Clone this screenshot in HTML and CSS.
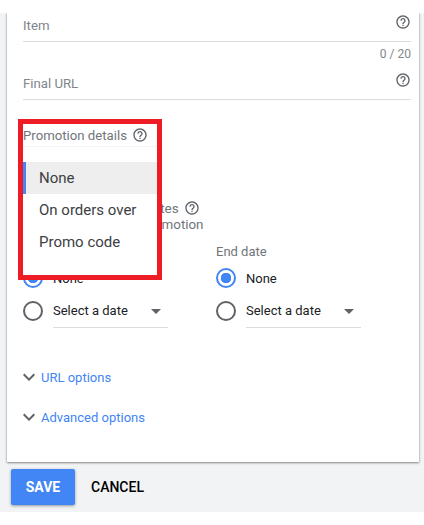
FILE: index.html
```html
<!DOCTYPE html>
<html lang="en">
<head>
    <meta charset="UTF-8">
    <meta name="viewport" content="width=device-width, initial-scale=1.0">
    <title>Promotion extension</title>
    <link rel="stylesheet" href="styles.css">
</head>
<body>
    <svg class="defs" width="0" height="0">
        <symbol id="help" viewBox="0 0 24 24">
            <path d="M11 18h2v-2h-2v2zm1-16C6.48 2 2 6.48 2 12s4.48 10 10 10 10-4.48 10-10S17.52 2 12 2zm0 18c-4.41 0-8-3.59-8-8s3.59-8 8-8 8 3.59 8 8-3.59 8-8 8zm0-14c-2.21 0-4 1.79-4 4h2c0-1.1.9-2 2-2s2 .9 2 2c0 2-3 1.75-3 5h2c0-2.25 3-2.5 3-5 0-2.21-1.79-4-4-4z"/>
        </symbol>
        <symbol id="chevron" viewBox="0 0 24 24">
            <path d="M16.59 8.59 12 13.17 7.41 8.59 6 10l6 6 6-6z"/>
        </symbol>
    </svg>

    <div class="page">
        <div class="card">
            <div class="field field_item">
                <span class="field_label">Item</span>
                <svg class="help"><use href="#help"/></svg>
            </div>
            <div class="counter">0 / 20</div>
            <div class="field field_url">
                <span class="field_label">Final URL</span>
                <svg class="help"><use href="#help"/></svg>
            </div>

            <div class="promo">
                <div class="promo_title">
                    Promotion details
                    <svg class="help"><use href="#help"/></svg>
                </div>

                <div class="promo_dates">
                    <div class="dates_title">
                        Add your promotion dates
                        <svg class="help"><use href="#help"/></svg>
                    </div>
                    <div class="dates_note">Dates shown with a promotion</div>
                </div>

                <div class="date_cols">
                    <div class="date_col">
                        <div class="date_label">Start date</div>
                        <label class="radio_row">
                            <span class="radio on"></span>
                            <span class="radio_text">None</span>
                        </label>
                        <label class="radio_row">
                            <span class="radio"></span>
                            <span class="date_select">Select a date<i class="arrow"></i></span>
                        </label>
                    </div>
                    <div class="date_col">
                        <div class="date_label">End date</div>
                        <label class="radio_row">
                            <span class="radio on"></span>
                            <span class="radio_text">None</span>
                        </label>
                        <label class="radio_row">
                            <span class="radio"></span>
                            <span class="date_select">Select a date<i class="arrow"></i></span>
                        </label>
                    </div>
                </div>

                <div class="highlight">
                    <ul class="menu">
                        <li class="selected">None</li>
                        <li>On orders over</li>
                        <li>Promo code</li>
                    </ul>
                </div>
            </div>

            <a href="" class="expander">
                <svg class="chevron"><use href="#chevron"/></svg>URL options
            </a>
            <a href="" class="expander expander_adv">
                <svg class="chevron"><use href="#chevron"/></svg>Advanced options
            </a>
        </div>

        <div class="footer">
            <button class="save">SAVE</button>
            <button class="cancel">CANCEL</button>
        </div>
    </div>
</body>
</html>
```

FILE: styles.css
```css
* { margin: 0; padding: 0; box-sizing: border-box; }
li { list-style: none; }
html, body { height: 100%; overflow: hidden; }
body {
    background: #fff;
    padding-top: 13px;
    font-family: Roboto, "Liberation Sans", sans-serif;
    font-size: 14px;
    color: #202124;
}
.defs { position: absolute; }
.page {
    height: 499px;
    background: #f1f3f4;
    padding: 0 5px 0 7px;
    overflow: hidden;
}
.card {
    height: 449px;
    background: #fff;
    padding: 0 8px 0 16px;
    box-shadow: 0 1px 2px rgba(60, 64, 67, .55), 0 0 2px rgba(60, 64, 67, .2);
}
.help {
    flex: none;
    width: 16px;
    height: 16px;
    fill: #5f6368;
}

/* text fields */
.field {
    display: flex;
    justify-content: space-between;
    border-bottom: 1px solid #dadce0;
}
.field .help { margin-top: 1px; }
.field_item { height: 29px; }
.field_url { height: 30px; padding-top: 1px; }
.field_label {
    color: #80868b;
    font-size: 13.2px;
    line-height: 26px;
}
.counter {
    height: 28px;
    padding-top: 5px;
    text-align: right;
    color: #80868b;
    font-size: 12px;
    line-height: 14px;
}

/* promotion block */
.promo {
    position: relative;
    height: 267px;
}
.promo_title {
    display: flex;
    align-items: center;
    gap: 5px;
    height: 20px;
    position: relative;
    top: 25px;
    color: #70757a;
    font-size: 13.2px;
}
.promo_dates {
    padding-top: 79px;
    color: #70757a;
    font-size: 13.5px;
}
.dates_title {
    display: flex;
    align-items: center;
    gap: 5px;
    height: 17px;
}
.dates_note {
    font-size: 13.35px;
    line-height: 17px;
}
.date_cols {
    display: flex;
    padding-top: 10px;
}
.date_col { width: 193px; }
.date_label {
    height: 18px;
    color: #70757a;
    font-size: 13px;
    line-height: 18px;
    margin-bottom: 7px;
}
.radio_row {
    display: flex;
    align-items: center;
    gap: 10px;
    height: 20px;
    margin-bottom: 13px;
}
.radio {
    flex: none;
    width: 20px;
    height: 20px;
    border: 2px solid #5f6368;
    border-radius: 50%;
}
.radio.on {
    border-color: #4285f4;
    background: radial-gradient(circle, #4285f4 5px, #fff 5.5px);
}
.radio_text { font-size: 13px; }
.date_select {
    position: relative;
    display: block;
    width: 115px;
    height: 27px;
    margin-top: 7px;
    border-bottom: 1px solid #dadce0;
    font-size: 13px;
    line-height: 20px;
}
.arrow {
    position: absolute;
    right: 7px;
    top: 8px;
    border-left: 5px solid transparent;
    border-right: 5px solid transparent;
    border-top: 5px solid #5f6368;
}

/* red highlight with the open menu */
.highlight {
    position: absolute;
    left: -5px;
    top: 19px;
    width: 144px;
    height: 161px;
    border: 5px solid #ee1c25;
    padding-top: 22px;
}
.menu {
    height: 100%;
    padding-top: 15px;
    background: #fff;
    border-top: 1px solid #f4f4f4;
    color: #3c4043;
    font-size: 15px;
}
.menu li {
    height: 32px;
    padding-left: 16px;
    line-height: 32px;
}
.menu .selected {
    background: #eee;
    border-left: 3px solid #4285f4;
    padding-left: 13px;
}

/* expanders */
.expander {
    display: flex;
    align-items: center;
    height: 20px;
    color: #4285f4;
    font-size: 13px;
    text-decoration: none;
}
.expander_adv { margin-top: 20px; }
.chevron {
    flex: none;
    width: 24px;
    height: 24px;
    margin-left: -6px;
    fill: #5f6368;
}

/* footer */
.footer {
    display: flex;
    align-items: center;
    height: 50px;
    margin-left: -7px;
    padding-left: 11px;
    gap: 16px;
}
.footer button {
    border: 0;
    font-family: inherit;
    font-size: 14px;
    font-weight: 500;
}
.save {
    width: 64px;
    height: 36px;
    background: #4285f4;
    color: #fff;
    border-radius: 2px;
    box-shadow: 0 1px 3px rgba(60, 64, 67, .5);
}
.footer .save { font-weight: 700; }
.cancel {
    background: none;
    color: #000;
}
```
